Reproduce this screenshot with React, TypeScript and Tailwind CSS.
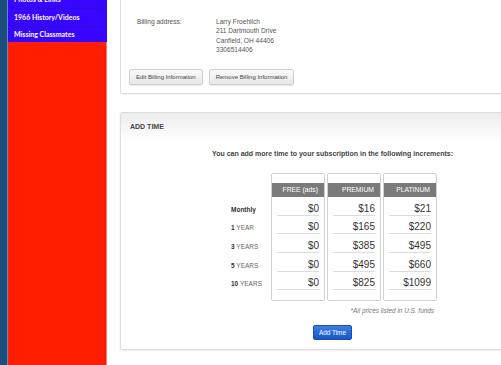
const navItems = ['Photos & Links', '1966 History/Videos', 'Missing Classmates'];

const rows = [
  { num: '', label: 'Monthly', prices: ['$0', '$16', '$21'] },
  { num: '1', label: 'YEAR', prices: ['$0', '$165', '$220'] },
  { num: '3', label: 'YEARS', prices: ['$0', '$385', '$495'] },
  { num: '5', label: 'YEARS', prices: ['$0', '$495', '$660'] },
  { num: '10', label: 'YEARS', prices: ['$0', '$825', '$1099'] },
];

const plans = ['FREE (ads)', 'PREMIUM', 'PLATINUM'];

export default function App() {
  return (
    <div
      className="flex h-[365px] w-[501px] overflow-hidden bg-white"
      style={{ fontFamily: '"Liberation Sans", Arial, sans-serif' }}
    >
      {/* sidebar */}
      <aside className="flex w-[107px] shrink-0">
        <div className="w-[8px] border-r border-[#5b8bc2] bg-[#1c4d7d]" />
        <div className="flex flex-1 flex-col">
          <nav className="-mt-[9px] bg-[#3806ff] px-[4px]" style={{ fontFamily: 'Lato, sans-serif' }}>
            {navItems.map((item, i) => (
              <div
                key={item}
                className={
                  i < navItems.length - 1
                    ? 'flex h-[18px] items-center border-b border-[#2a10d2] pl-[2px] text-[7px] font-bold text-white'
                    : 'flex h-[15px] items-center pl-[2px] text-[7px] font-bold text-white'
                }
              >
                {item}
              </div>
            ))}
          </nav>
          <div className="flex-1 border-r border-[#ff7a6a] bg-[#ff1f00]" />
        </div>
      </aside>

      {/* main */}
      <main className="-mt-[10px] ml-[13px] w-[425px] shrink-0">
        <section className="rounded-[2px] border border-[#dedede] bg-white pb-[8px] pl-[8px] pt-[26px] shadow-[0_1px_1px_rgba(0,0,0,0.05)]">
          <div className="flex pl-[8px] text-[6.6px] leading-[9.3px] text-[#555]">
            <div className="w-[79px]">Billing address:</div>
            <div>
              <div>Larry Froehlich</div>
              <div>211 Dartmouth Drive</div>
              <div>Canfield, OH 44406</div>
              <div>3306514406</div>
            </div>
          </div>
          <div className="mt-[15px] flex gap-[6px]">
            <button className="h-[16px] rounded-[2px] border border-[#cfcfcf] bg-gradient-to-b from-[#fafafa] to-[#e8e8e8] px-[6px] text-[6px] text-[#444] shadow-[0_1px_1px_rgba(0,0,0,0.08)]">
              Edit Billing Information
            </button>
            <button className="h-[16px] rounded-[2px] border border-[#cfcfcf] bg-gradient-to-b from-[#fafafa] to-[#e8e8e8] px-[6px] text-[6px] text-[#444] shadow-[0_1px_1px_rgba(0,0,0,0.08)]">
              Remove Billing Information
            </button>
          </div>
        </section>

        <section className="mt-[18px] rounded-[2px] border border-[#dedede] bg-white pb-[9px] shadow-[0_1px_2px_rgba(0,0,0,0.08)]">
          <div className="flex h-[28px] items-center bg-gradient-to-b from-[#ececec] to-white pl-[9px] text-[7px] font-bold text-[#444]">
            ADD TIME
          </div>
          <p className="mt-[8px] text-center text-[7px] font-bold leading-[9px] text-[#444]">
            You can add more time to your subscription in the following increments:
          </p>

          <div className="mx-auto mt-[15px] w-[209px]">
            <div className="flex">
              <div className="w-[45px] pl-[3px] pt-[24px]">
                {rows.map((r) => (
                  <div key={r.label + r.num} className="flex h-[18.6px] items-end pb-[2px] text-[6.5px] leading-[8px]">
                    {r.num ? (
                      <span>
                        <span className="font-bold text-[#333]">{r.num}</span>{' '}
                        <span className="text-[#666]">{r.label}</span>
                      </span>
                    ) : (
                      <span className="font-bold text-[#333]">{r.label}</span>
                    )}
                  </div>
                ))}
              </div>
              <div className="flex gap-[2px]">
                {plans.map((plan, ci) => (
                  <div key={plan} className="w-[54px] rounded-[2px] border border-[#d2d2d2] pb-[10px] pt-[9px]">
                    <div className="flex h-[14px] items-center justify-end bg-[#7a7a7a] pr-[6px] text-[6.8px] text-white">
                      {plan}
                    </div>
                    {rows.map((r) => (
                      <div
                        key={r.label + r.num}
                        className="mx-[5px] flex h-[18.6px] items-end justify-end border-b border-[#dcdcdc] pb-[1px] text-[10px] leading-[11px] text-[#333]"
                      >
                        {r.prices[ci]}
                      </div>
                    ))}
                  </div>
                ))}
              </div>
            </div>
            <p className="mt-[5px] pr-[3px] text-right text-[6.4px] italic leading-[9px] text-[#777]">
              *All prices listed in U.S. funds
            </p>
          </div>

          <div className="mt-[10px] flex justify-center">
            <button className="h-[15px] w-[39px] rounded-[2px] border border-[#1c4fb0] bg-gradient-to-b from-[#3a80e4] to-[#1a55c8] text-[6.4px] text-white">
              Add Time
            </button>
          </div>
        </section>
      </main>
    </div>
  );
}
